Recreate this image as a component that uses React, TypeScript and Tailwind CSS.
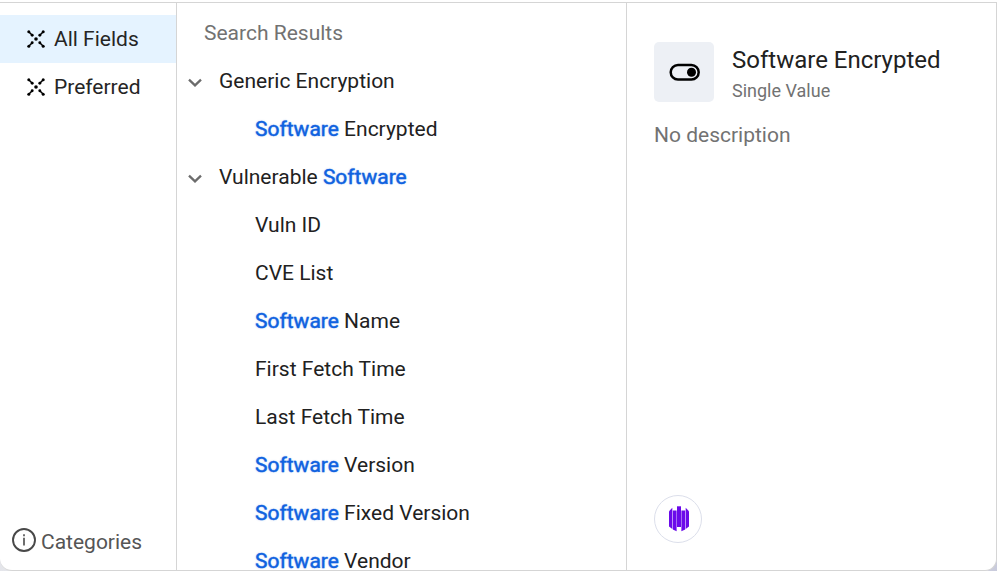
import React from "react";

function Highlight({ text }: { text: string }) {
  const parts = text.split(/(Software)/);
  return (
    <span className="whitespace-pre">
      {parts.map((part, i) =>
        part === "Software" ? (
          <span key={i} className="text-[#1062e0] [-webkit-text-stroke:0.35px_#1062e0] [text-shadow:0_0_1.5px_#1062e090]">{part}</span>
        ) : (
          part
        )
      )}
    </span>
  );
}

function DotsIcon() {
  const outer = [[1.8, 1.8], [16.2, 1.8], [1.8, 16.2], [16.2, 16.2]];
  const inner = [[5.2, 5.2], [12.8, 5.2], [5.2, 12.8], [12.8, 12.8]];
  return (
    <svg width="18" height="18" viewBox="0 0 18 18" className="shrink-0">
      <path d="M2 2l3.2 3.2M16 2l-3.2 3.2M2 16l3.2-3.2M16 16l-3.2-3.2" stroke="#000" strokeWidth="1.6" />
      {outer.map(([x, y]) => <circle key={`${x}-${y}`} cx={x} cy={y} r="1.5" />)}
      {inner.map(([x, y]) => <circle key={`${x}-${y}`} cx={x} cy={y} r="1.45" />)}
      <circle cx="9" cy="9" r="1.8" />
    </svg>
  );
}

function Chevron() {
  return (
    <svg width="14" height="9" viewBox="0 0 14 9" className="mt-[3px] shrink-0">
      <path d="M1 1.6l6 5.8 6-5.8" fill="none" stroke="#6c6c6c" strokeWidth="2.3" />
    </svg>
  );
}

function NavItem({ label, active }: { label: string; active?: boolean }) {
  return (
    <div className={`flex h-12 items-center gap-[9px] pl-[27px] text-[#252525] ${active ? "bg-[#e5f3ff]" : ""}`}>
      <DotsIcon />
      <span>{label}</span>
    </div>
  );
}

function Group({ title, items }: { title: string; items: string[] }) {
  return (
    <section>
      <div className="flex h-12 items-center gap-[17px] pl-[11px]">
        <Chevron />
        <Highlight text={title} />
      </div>
      {items.map((item) => (
        <div key={item} className="flex h-12 items-center pl-[78px]">
          <Highlight text={item} />
        </div>
      ))}
    </section>
  );
}

const vulnerable = [
  "Vuln ID",
  "CVE List",
  "Software Name",
  "First Fetch Time",
  "Last Fetch Time",
  "Software Version",
  "Software Fixed Version",
  "Software Vendor",
];

export default function App() {
  return (
    <div className="h-[571px] w-[997px] overflow-hidden bg-[linear-gradient(90deg,#e4e5ea,#fff_20%,#fff_80%,#c9cbdc)] font-['Roboto',sans-serif] text-[21px] leading-6 text-[#212121]">
      <div className="h-[2px] bg-white" />
      <div className="flex h-[569px] rounded-b-[12px] border-t border-r border-b border-[#d5d5d5] bg-white">
        <aside className="flex w-[177px] shrink-0 flex-col border-r border-[#d5d5d5] pt-3">
          <NavItem label="All Fields" active />
          <NavItem label="Preferred" />
          <div className="mt-auto mb-4 flex items-center gap-[5px] pl-3 text-[#555]">
            <svg width="24" height="24" viewBox="0 0 24 24" className="-mt-1 shrink-0">
              <circle cx="12" cy="12" r="11" fill="none" stroke="#484848" strokeWidth="1.9" />
              <path d="M12 9.8v7.7M12 6.2v2" stroke="#555" strokeWidth="1.7" />
            </svg>
            <span>Categories</span>
          </div>
        </aside>

        <main className="w-[450px] shrink-0 overflow-hidden border-r border-[#d5d5d5] pt-[6px]">
          <h2 className="flex h-12 items-center pl-[27px] text-[#727272]">Search Results</h2>
          <Group title="Generic Encryption" items={["Software Encrypted"]} />
          <Group title="Vulnerable Software" items={vulnerable} />
        </main>

        <article className="flex min-w-0 flex-1 flex-col pt-[39px] pl-[27px]">
          <header className="flex h-[60px] gap-[18px]">
            <div className="flex size-[60px] shrink-0 items-center justify-center rounded-[5px] bg-[#edf0f5]">
              <svg width="32" height="18" viewBox="0 0 32 18">
                <rect x="2.7" y="2" width="28" height="14.6" rx="7.3" fill="none" stroke="#000" strokeWidth="2.5" />
                <circle cx="23.5" cy="9.3" r="4.5" />
              </svg>
            </div>
            <div>
              <h1 className="mt-1 whitespace-nowrap text-[24px] leading-7">Software Encrypted</h1>
              <p className="mt-[5px] text-[18px] leading-6 text-[#727272]">Single Value</p>
            </div>
          </header>
          <p className="mt-[21px] text-[#727272]">No description</p>
          <div className="mt-auto mb-[27px] flex size-12 items-center justify-center rounded-full border border-[#dcdfeb]">
            <svg width="22" height="26" viewBox="0 0 22 26" fill="#6b0aea" className="ml-[2px]">
              <path d="M1 5.2L4.3 1.8V23L1 20.6z" />
              <path d="M4.8 4.5H8.6V25.3L4.8 23.4z" />
              <path d="M9 .3h4v20.7H9z" />
              <path d="M13.4 4.5h3.8v18.9l-3.8 1.9z" />
              <path d="M17.7 1.8L21 5.2v15.4L17.7 23z" />
            </svg>
          </div>
        </article>
      </div>
    </div>
  );
}
